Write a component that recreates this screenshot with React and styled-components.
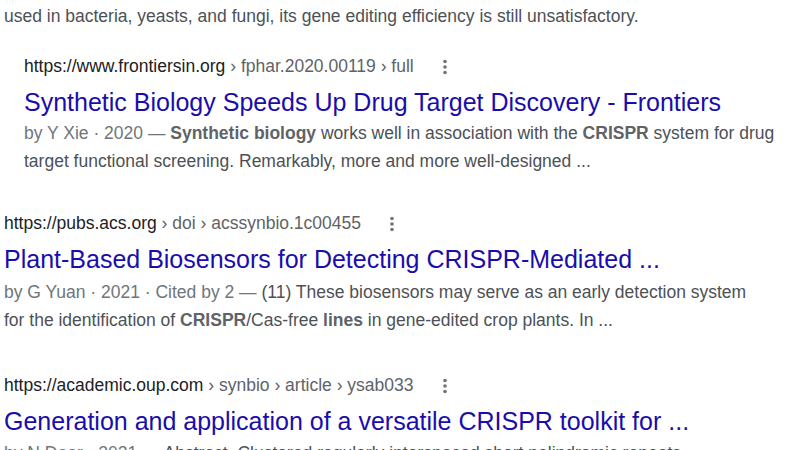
import React from "react";
import styled, { createGlobalStyle } from "styled-components";

const GlobalStyle = createGlobalStyle`
  html, body {
    margin: 0;
    padding: 0;
    background: #ffffff;
    overflow: hidden;
  }
  body {
    font-family: "Liberation Sans", Arial, sans-serif;
  }
`;

const Page = styled.main`
  box-sizing: border-box;
  width: 791px;
  height: 450px;
  overflow: hidden;
  padding: 2px 0 0 4px;
`;

const Snippet = styled.div`
  font-size: 17.5px;
  line-height: 28px;
  color: #4d5156;
  white-space: nowrap;
  margin-top: ${(p) => p.$top || 0}px;
`;

const Meta = styled.span`
  color: #70757a;
`;

const Em = styled.b`
  font-weight: 700;
  color: #5f6368;
`;

const Result = styled.section`
  margin-top: ${(p) => p.$gap}px;
  margin-left: ${(p) => (p.$nested ? 20 : 0)}px;
`;

const UrlRow = styled.div`
  display: flex;
  align-items: center;
  height: 27.5px;
  font-size: 17.5px;
  line-height: 27.5px;
  white-space: nowrap;
`;

const Cite = styled.cite`
  font-style: normal;
  color: #5f6368;
`;

const Host = styled.span`
  color: #202124;
`;

const MenuButton = styled.span`
  display: inline-flex;
  width: 22px;
  height: 22px;
  margin-left: 20px;
  color: #70757a;
`;

const TitleLink = styled.a`
  display: block;
  text-decoration: none;
`;

const Title = styled.h3`
  margin: 5px 0 0;
  font-size: 25px;
  line-height: 32.5px;
  font-weight: 400;
  color: #1a0dab;
  white-space: nowrap;
`;

const Kebab = () => (
  <MenuButton>
    <svg width="22" height="22" viewBox="0 0 24 24" fill="currentColor">
      <circle cx="12" cy="6" r="2" />
      <circle cx="12" cy="12" r="2" />
      <circle cx="12" cy="18" r="2" />
    </svg>
  </MenuButton>
);

const results = [
  {
    gap: 23,
    snipTop: 0.5,
    nested: true,
    host: "https://www.frontiersin.org",
    crumbs: " › fphar.2020.00119 › full",
    title: "Synthetic Biology Speeds Up Drug Target Discovery - Frontiers",
    lines: [
      <>
        <Meta>by Y Xie · 2020 — </Meta>
        <Em>Synthetic biology</Em> works well in association with the <Em>CRISPR</Em> system for drug
      </>,
      <>target functional screening. Remarkably, more and more well-designed ...</>,
    ],
  },
  {
    gap: 35.5,
    snipTop: 2.5,
    host: "https://pubs.acs.org",
    crumbs: " › doi › acssynbio.1c00455",
    title: "Plant-Based Biosensors for Detecting CRISPR-Mediated ...",
    lines: [
      <>
        <Meta>by G Yuan · 2021 · Cited by 2 — </Meta>
        (11) These biosensors may serve as an early detection system
      </>,
      <>
        for the identification of <Em>CRISPR</Em>/Cas-free <Em>lines</Em> in gene-edited crop plants. In ...
      </>,
    ],
  },
  {
    gap: 38.5,
    snipTop: 1.5,
    host: "https://academic.oup.com",
    crumbs: " › synbio › article › ysab033",
    title: "Generation and application of a versatile CRISPR toolkit for ...",
    lines: [
      <>
        <Meta>by N Daer · 2021 — </Meta>
        Abstract. Clustered regularly interspaced short palindromic repeats
      </>,
    ],
  },
];

export default function App() {
  return (
    <>
      <GlobalStyle />
      <Page>
        <Snippet>
          used in bacteria, yeasts, and fungi, its gene editing efficiency is still unsatisfactory.
        </Snippet>
        {results.map((r, i) => (
          <Result key={i} $gap={r.gap} $nested={r.nested}>
            <UrlRow>
              <Cite>
                <Host>{r.host}</Host>
                {r.crumbs}
              </Cite>
              <Kebab />
            </UrlRow>
            <TitleLink href="#">
              <Title>{r.title}</Title>
            </TitleLink>
            {r.lines.map((l, j) => (
              <Snippet key={j} $top={j === 0 ? r.snipTop : 0}>
                {l}
              </Snippet>
            ))}
          </Result>
        ))}
      </Page>
    </>
  );
}
